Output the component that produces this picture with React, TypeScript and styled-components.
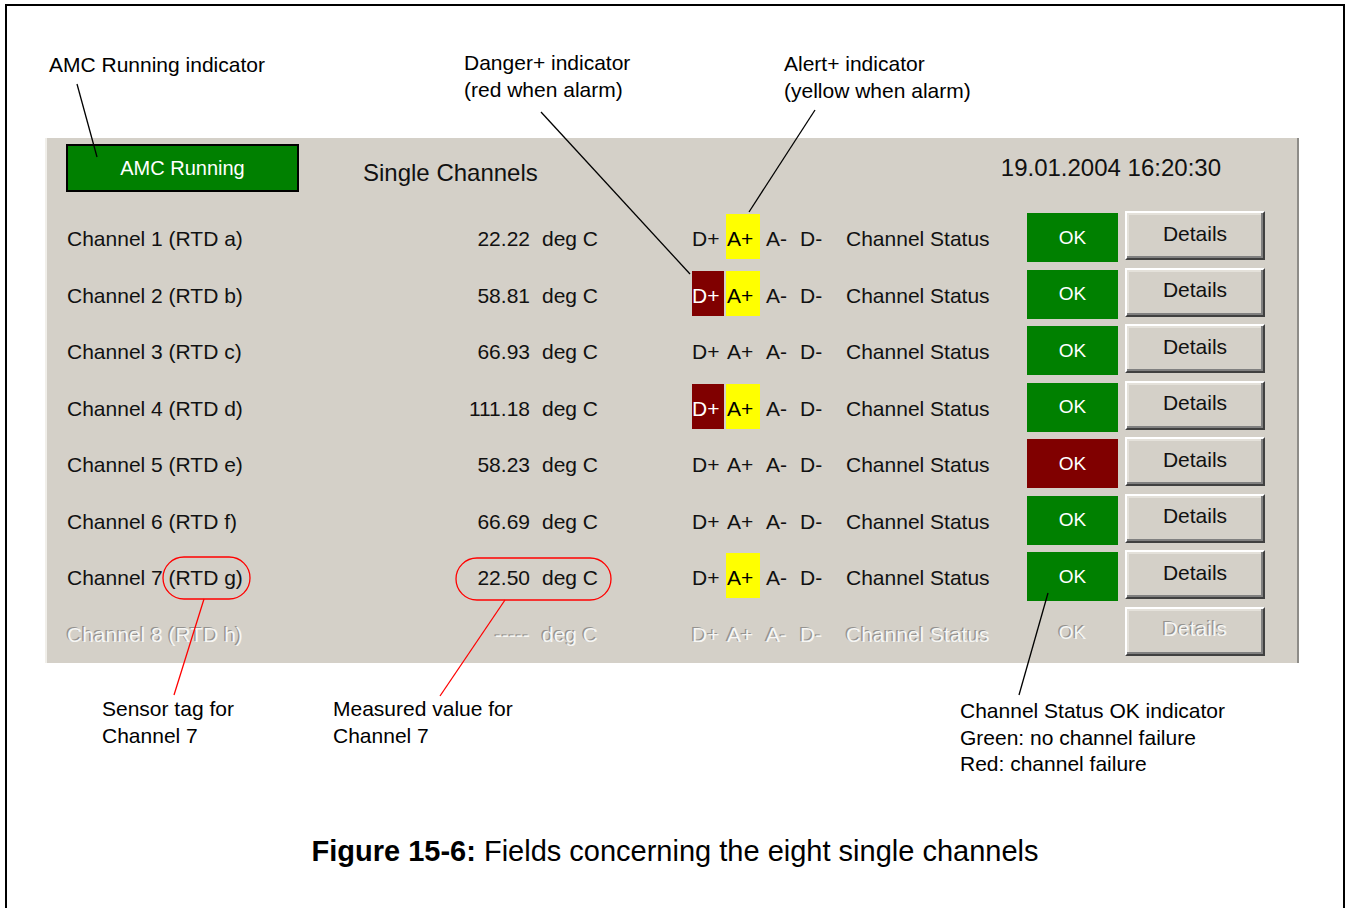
import React from 'react';
import styled, { createGlobalStyle, css } from 'styled-components';

type Channel = {
  name: string;
  value: string;
  dPlus?: boolean;
  aPlus?: boolean;
  failure?: boolean;
  disabled?: boolean;
};

const channels: Channel[] = [
  { name: 'Channel 1 (RTD a)', value: '22.22', aPlus: true },
  { name: 'Channel 2 (RTD b)', value: '58.81', dPlus: true, aPlus: true },
  { name: 'Channel 3 (RTD c)', value: '66.93' },
  { name: 'Channel 4 (RTD d)', value: '111.18', dPlus: true, aPlus: true },
  { name: 'Channel 5 (RTD e)', value: '58.23', failure: true },
  { name: 'Channel 6 (RTD f)', value: '66.69' },
  { name: 'Channel 7 (RTD g)', value: '22.50', aPlus: true },
  { name: 'Channel 8 (RTD h)', value: '-----', disabled: true },
];

const flags = [
  { label: 'D+', width: 32, inset: 0 },
  { label: 'A+', width: 34, inset: 1 },
  { label: 'A-', width: 34, inset: 4 },
  { label: 'D-', width: 34, inset: 2 },
];

const App = () => {
  return (
    <Page>
      <GlobalStyle />
      <Frame>
        <TopNotes>
          <Note $left={42} $top={46}>AMC Running indicator</Note>
          <Note $left={457} $top={44}>
            Danger+ indicator
            <br />
            (red when alarm)
          </Note>
          <Note $left={777} $top={45}>
            Alert+ indicator
            <br />
            (yellow when alarm)
          </Note>
        </TopNotes>

        <Panel>
          <Header>
            <AmcBox>AMC Running</AmcBox>
            <Title>Single Channels</Title>
            <Clock>19.01.2004 16:20:30</Clock>
          </Header>

          {channels.map((ch) => (
            <Row key={ch.name}>
              <Cell $disabled={ch.disabled}>{ch.name}</Cell>
              <Value $disabled={ch.disabled}>{ch.value}</Value>
              <Unit $disabled={ch.disabled}>deg C</Unit>
              <Flags>
                {flags.map((f) => {
                  const tone =
                    f.label === 'D+' && ch.dPlus
                      ? 'danger'
                      : f.label === 'A+' && ch.aPlus
                        ? 'alert'
                        : undefined;
                  return (
                    <Flag
                      key={f.label}
                      $width={f.width}
                      $inset={f.inset}
                      $tone={tone}
                      $disabled={ch.disabled}
                    >
                      {f.label}
                    </Flag>
                  );
                })}
              </Flags>
              <Cell $disabled={ch.disabled}>Channel Status</Cell>
              <StatusBox $failure={ch.failure} $disabled={ch.disabled}>
                OK
              </StatusBox>
              <DetailsButton $disabled={ch.disabled}>Details</DetailsButton>
            </Row>
          ))}
        </Panel>

        <BottomNotes>
          <Note $left={95} $top={33}>
            Sensor tag for
            <br />
            Channel 7
          </Note>
          <Note $left={326} $top={33}>
            Measured value for
            <br />
            Channel 7
          </Note>
          <Note $left={953} $top={35}>
            Channel Status OK indicator
            <br />
            Green: no channel failure
            <br />
            Red: channel failure
          </Note>
        </BottomNotes>

        <Caption>
          <strong>Figure 15-6:</strong> Fields concerning the eight single
          channels
        </Caption>
      </Frame>

      <Leaders viewBox="0 0 1345 908" width={1345} height={908}>
        <g stroke="#000" strokeWidth={1.3} fill="none">
          <line x1={77} y1={84} x2={97} y2={157} />
          <line x1={541} y1={112} x2={690} y2={274} />
          <line x1={815} y1={110} x2={749} y2={212} />
          <line x1={1048} y1={593} x2={1019} y2={695} />
        </g>
        <g stroke="#f00" strokeWidth={1.3} fill="none">
          <rect x={163} y={557} width={87} height={42} rx={21} />
          <line x1={204} y1={599} x2={174} y2={695} />
          <rect x={456} y={558} width={155} height={42} rx={21} />
          <line x1={505} y1={600} x2={440} y2={696} />
        </g>
      </Leaders>
    </Page>
  );
};

const GlobalStyle = createGlobalStyle`
  html, body {
    margin: 0;
    background: #fff;
  }
  body {
    font-family: 'Liberation Sans', Arial, sans-serif;
    color: #000;
  }
`;

const Page = styled.div`
  position: relative;
  width: 1345px;
  height: 908px;
  overflow: hidden;
`;

const Frame = styled.div`
  box-sizing: border-box;
  width: 1340px;
  height: 920px;
  margin: 4px 0 0 5px;
  border: 2px solid #000;
  border-bottom: 0;
`;

const TopNotes = styled.div`
  position: relative;
  height: 132px;
`;

const BottomNotes = styled.div`
  position: relative;
  height: 170px;
`;

const Note = styled.div<{ $left: number; $top: number }>`
  position: absolute;
  left: ${(p) => p.$left}px;
  top: ${(p) => p.$top}px;
  font-size: 21px;
  line-height: 26.5px;
  white-space: nowrap;
`;

const Panel = styled.div`
  box-sizing: border-box;
  width: 1254px;
  height: 525px;
  margin-left: 38px;
  background: #d4d0c8;
  border-left: 2px solid #f1efea;
  border-right: 2px solid #8e8c88;
  font-size: 21px;
  color: #111;
`;

const Header = styled.div`
  display: flex;
  align-items: flex-start;
  height: 73px;
`;

const AmcBox = styled.div`
  box-sizing: border-box;
  display: flex;
  align-items: center;
  justify-content: center;
  width: 233px;
  height: 48px;
  margin: 6px 0 0 19px;
  border: 2px solid #000;
  background: #008000;
  color: #fff;
  font-size: 20px;
`;

const Title = styled.div`
  margin: 20px 0 0 64px;
  font-size: 24px;
  line-height: 30px;
`;

const Clock = styled.div`
  margin: 15px 76px 0 auto;
  font-size: 24px;
  line-height: 30px;
`;

const Row = styled.div`
  display: grid;
  grid-template-columns: 363px 100px 162px 154px 181px 91px 147px;
  align-items: start;
  height: 56.5px;
  padding-left: 20px;
`;

const disabledText = css`
  color: #f6f6f4;
  text-shadow: -1.5px -1px 0 #959390;
`;

const Cell = styled.div<{ $disabled?: boolean }>`
  line-height: 56px;
  white-space: nowrap;
  ${(p) => p.$disabled && disabledText}
`;

const Value = styled(Cell)`
  text-align: right;
`;

const Unit = styled(Cell)`
  padding-left: 12px;
`;

const Flags = styled.div`
  display: flex;
  gap: 2px;
`;

const Flag = styled.div<{
  $width: number;
  $inset: number;
  $tone?: 'danger' | 'alert';
  $disabled?: boolean;
}>`
  box-sizing: border-box;
  width: ${(p) => p.$width}px;
  height: 45px;
  margin-top: 3px;
  padding-left: ${(p) => p.$inset}px;
  line-height: 50px;
  white-space: nowrap;
  ${(p) =>
    p.$tone === 'danger' &&
    css`
      background: #800000;
      color: #fff;
    `}
  ${(p) =>
    p.$tone === 'alert' &&
    css`
      background: #ffff00;
      color: #000;
    `}
  ${(p) => p.$disabled && disabledText}
`;

const StatusBox = styled.div<{ $failure?: boolean; $disabled?: boolean }>`
  display: flex;
  align-items: center;
  justify-content: center;
  height: 49px;
  margin-top: 2px;
  font-size: 19px;
  color: #fff;
  background: ${(p) =>
    p.$disabled ? 'transparent' : p.$failure ? '#800000' : '#008000'};
  ${(p) => p.$disabled && disabledText}
`;

const DetailsButton = styled.div<{ $disabled?: boolean }>`
  box-sizing: border-box;
  justify-self: end;
  display: flex;
  align-items: center;
  justify-content: center;
  width: 140px;
  height: 49px;
  padding-bottom: 4px;
  background: #d4d0c8;
  border: 2px solid;
  border-color: #fff #404040 #404040 #fff;
  box-shadow:
    inset -2px -2px 0 #808080,
    inset 2px 2px 0 #e4e1da;
  ${(p) => p.$disabled && disabledText}
`;

const Caption = styled.div`
  font-size: 29px;
  line-height: 36px;
  text-align: center;

  strong {
    font-weight: bold;
  }
`;

const Leaders = styled.svg`
  position: absolute;
  top: 0;
  left: 0;
  pointer-events: none;
`;

export default App;
